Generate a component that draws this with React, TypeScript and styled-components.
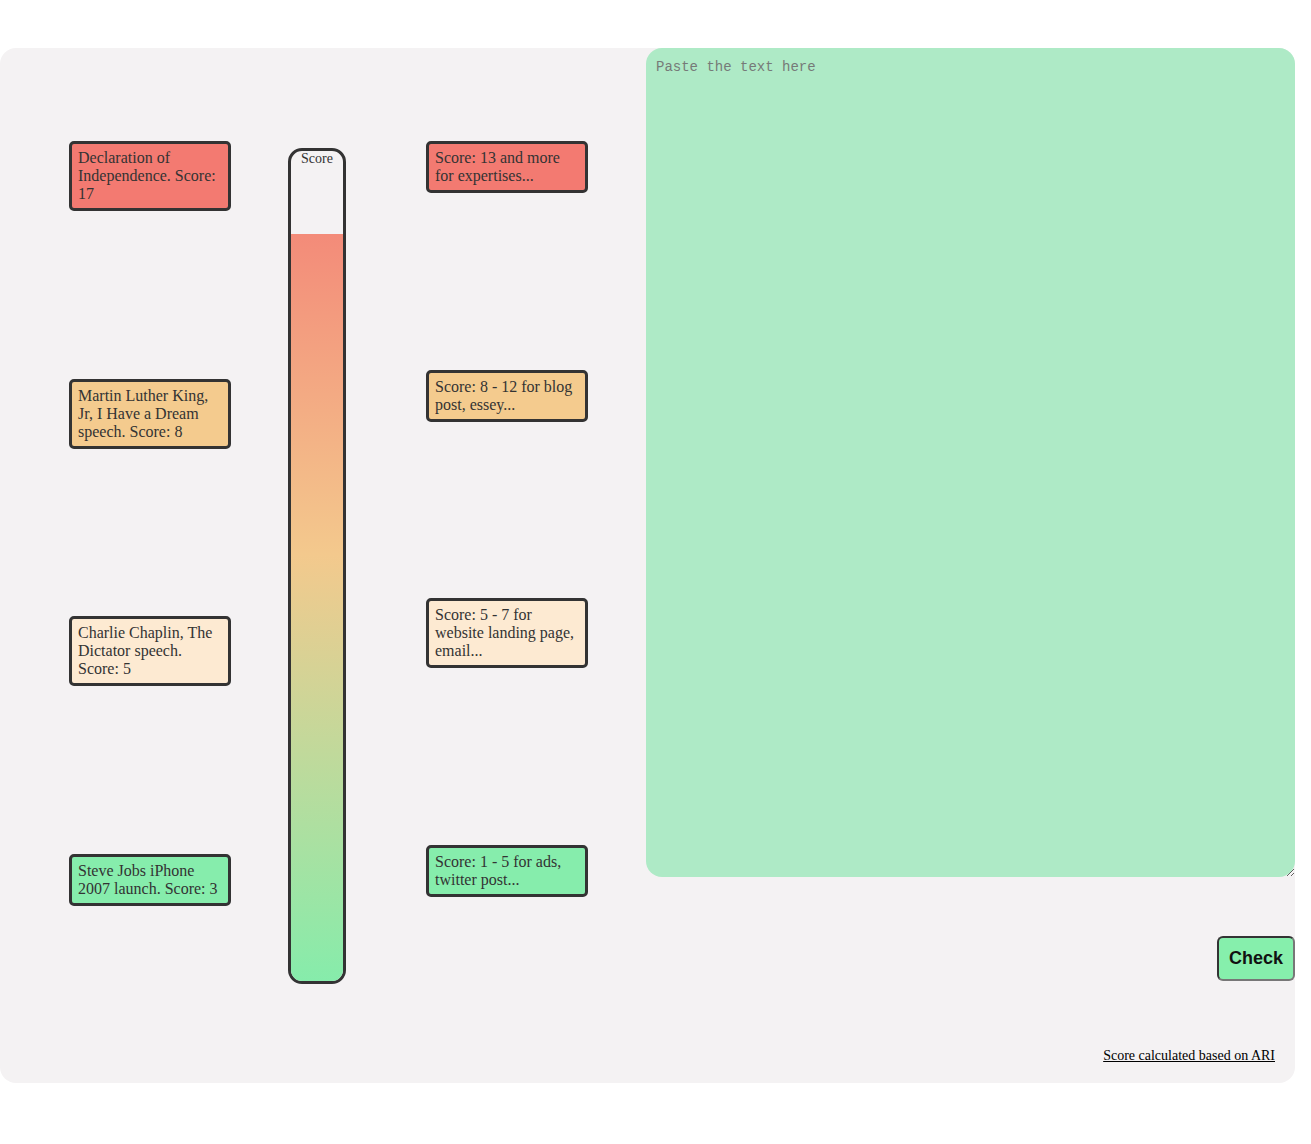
import styled, { createGlobalStyle } from "styled-components";

const GlobalStyle = createGlobalStyle`
  body {
    margin: 0;
    background: #ffffff;
    font-family: "Liberation Serif", "Times New Roman", serif;
  }
`;

const Page = styled.div`
  padding: 48px 16px 61px 0;
`;

const Container = styled.div`
  display: flex;
  width: 1295px;
  height: 1035px;
  background: #f4f2f3;
  border-radius: 16px;
`;

const ScalePanel = styled.div`
  display: flex;
  width: 646px;
  flex-shrink: 0;
  padding-left: 69px;
  box-sizing: border-box;
`;

const CardColumn = styled.div<{ $height: number; $gapLeft: number }>`
  display: flex;
  flex-direction: column;
  justify-content: space-between;
  width: 162px;
  height: ${(p) => p.$height}px;
  margin-top: 93px;
  margin-left: ${(p) => p.$gapLeft}px;
`;

const Card = styled.div<{ $bg: string }>`
  background: ${(p) => p.$bg};
  border: 3px solid #333333;
  border-radius: 5px;
  padding: 5px 6px;
  color: #333333;
  font-size: 16px;
  line-height: 18px;
`;

const Bar = styled.div`
  display: flex;
  flex-direction: column;
  width: 58px;
  height: 836px;
  margin-top: 100px;
  margin-left: 57px;
  box-sizing: border-box;
  border: 3px solid #333333;
  border-radius: 14px;
  overflow: hidden;
`;

const BarLabel = styled.div`
  text-align: center;
  color: #333333;
  font-size: 14px;
  line-height: 14px;
  padding-top: 1px;
`;

const BarFill = styled.div`
  margin-top: auto;
  background: linear-gradient(to bottom, #f38b79 0%, #f3c98d 43%, #86ecab 100%);
`;

const InputPanel = styled.div`
  display: flex;
  flex-direction: column;
  flex: 1;
`;

const TextArea = styled.textarea`
  height: 829px;
  box-sizing: border-box;
  background: #aeeac6;
  border: none;
  border-radius: 16px;
  padding: 11px 10px 10px;
  font-family: "Liberation Mono", "DejaVu Sans Mono", monospace;
  font-size: 14px;
  color: #333333;
  outline: none;

  &::placeholder {
    color: #767a78;
  }
`;

const ButtonRow = styled.div`
  display: flex;
  justify-content: flex-end;
  margin-top: 59px;
`;

const CheckButton = styled.button`
  width: 78px;
  height: 45px;
  background: #86efac;
  border: 2px solid #333333;
  border-right-color: #777777;
  border-bottom-color: #777777;
  border-radius: 6px;
  font-family: "Liberation Sans", Arial, sans-serif;
  font-weight: 700;
  font-size: 18px;
  color: #111111;
  cursor: pointer;
`;

const Footer = styled.div`
  margin-top: auto;
  padding: 0 20px 19px 0;
  text-align: right;
  font-size: 14px;
`;

const FooterLink = styled.a`
  color: #000000;
  text-decoration: underline;
`;

const examples = [
  { text: "Declaration of Independence. Score: 17", bg: "#f37a71" },
  { text: "Martin Luther King, Jr, I Have a Dream speech. Score: 8", bg: "#f4cb8e" },
  { text: "Charlie Chaplin, The Dictator speech. Score: 5", bg: "#fdead2" },
  { text: "Steve Jobs iPhone 2007 launch. Score: 3", bg: "#86edac" },
];

const ranges = [
  { text: "Score: 13 and more for expertises...", bg: "#f37a71" },
  { text: "Score: 8 - 12 for blog post, essey...", bg: "#f4cb8e" },
  { text: "Score: 5 - 7 for website landing page, email...", bg: "#fdead2" },
  { text: "Score: 1 - 5 for ads, twitter post...", bg: "#86edac" },
];

const score = 17;
const maxScore = 18.9;

const App = () => {
  const fillPct = Math.min(100, (score / maxScore) * 100);

  return (
    <>
      <GlobalStyle />
      <Page>
        <Container>
          <ScalePanel>
            <CardColumn $height={765} $gapLeft={0}>
              {examples.map((e) => (
                <Card key={e.text} $bg={e.bg}>
                  {e.text}
                </Card>
              ))}
            </CardColumn>
            <Bar>
              <BarLabel>Score</BarLabel>
              <BarFill style={{ height: `${fillPct}%` }} />
            </Bar>
            <CardColumn $height={756} $gapLeft={80}>
              {ranges.map((r) => (
                <Card key={r.text} $bg={r.bg}>
                  {r.text}
                </Card>
              ))}
            </CardColumn>
          </ScalePanel>
          <InputPanel>
            <TextArea placeholder="Paste the text here" />
            <ButtonRow>
              <CheckButton>Check</CheckButton>
            </ButtonRow>
            <Footer>
              <FooterLink href="#">Score calculated based on ARI</FooterLink>
            </Footer>
          </InputPanel>
        </Container>
      </Page>
    </>
  );
};

export default App;
